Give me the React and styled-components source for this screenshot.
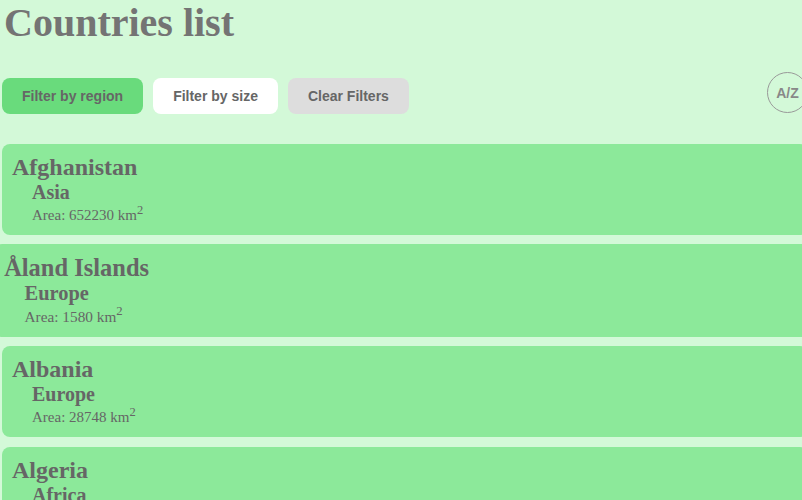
import React from 'react'
import styled, { createGlobalStyle } from 'styled-components'

const countries = [
  { name: 'Afghanistan', region: 'Asia', area: 652230 },
  { name: 'Åland Islands', region: 'Europe', area: 1580 },
  { name: 'Albania', region: 'Europe', area: 28748 },
  { name: 'Algeria', region: 'Africa', area: 2381741 },
  { name: 'American Samoa', region: 'Oceania', area: 199 },
]

const App = () => {
  return (
    <Page>
      <GlobalStyle />
      <Title>Countries list</Title>
      <Toolbar>
        <Filters>
          <FilterButton variant='region'>Filter by region</FilterButton>
          <FilterButton variant='size'>Filter by size</FilterButton>
          <FilterButton variant='clear'>Clear Filters</FilterButton>
        </Filters>
        <SortButton>A/Z</SortButton>
      </Toolbar>
      <List>
        {countries.map((country) => (
          <Card key={country.name} hovered={country.name === 'Åland Islands'}>
            <Name>{country.name}</Name>
            <Region>{country.region}</Region>
            <Area>
              Area: {country.area} km<sup>2</sup>
            </Area>
          </Card>
        ))}
      </List>
    </Page>
  )
}

export default App

const GlobalStyle = createGlobalStyle`
  html, body {
    margin: 0;
    overflow-x: hidden;
    background: #d3f9d8;
  }
`
const Page = styled.div`
  width: 808px;
  box-sizing: border-box;
  padding-left: 2px;
  font-family: 'Liberation Serif', 'Times New Roman', serif;
  color: #666;
`
const Title = styled.h1`
  margin: 0;
  padding-left: 2px;
  font-size: 40px;
  line-height: 46px;
  font-weight: 700;
  color: #747474;
`
const Toolbar = styled.div`
  margin-top: 26px;
  display: flex;
  justify-content: space-between;
  align-items: flex-start;
`
const Filters = styled.div`
  margin-top: 6px;
  display: flex;
  gap: 10px;
`
const FilterButton = styled.button`
  height: 36px;
  padding: 0 20px;
  border: none;
  border-radius: 8px;
  font-family: 'Liberation Sans', Arial, sans-serif;
  font-size: 14px;
  font-weight: 700;
  color: #666;
  cursor: pointer;
  background: ${({ variant }) =>
    variant === 'region' ? '#69db7c' : variant === 'size' ? '#fff' : '#dddddd'};
`
const SortButton = styled.button`
  width: 41px;
  height: 41px;
  box-sizing: border-box;
  padding: 0;
  border: 1px solid #999;
  border-radius: 50%;
  background: transparent;
  font-family: 'Liberation Sans', Arial, sans-serif;
  font-size: 14px;
  font-weight: 700;
  color: #888;
`
const List = styled.div`
  margin-top: 30px;
  display: flex;
  flex-direction: column;
  gap: 10px;
`
const Card = styled.div`
  box-sizing: border-box;
  height: 91px;
  padding: 9px 10px 7px;
  border-radius: 8px;
  background: #8ce99a;
  transform: ${({ hovered }) => (hovered ? 'scale(1.02)' : 'none')};
`
const Name = styled.h2`
  margin: 0;
  font-size: 24px;
  line-height: 28px;
  font-weight: 700;
`
const Region = styled.h3`
  margin: 0 0 0 20px;
  font-size: 20px;
  line-height: 22px;
  font-weight: 700;
`
const Area = styled.p`
  margin: 0 0 0 20px;
  font-size: 15px;
  line-height: 25px;

  sup {
    line-height: 0;
  }
`
